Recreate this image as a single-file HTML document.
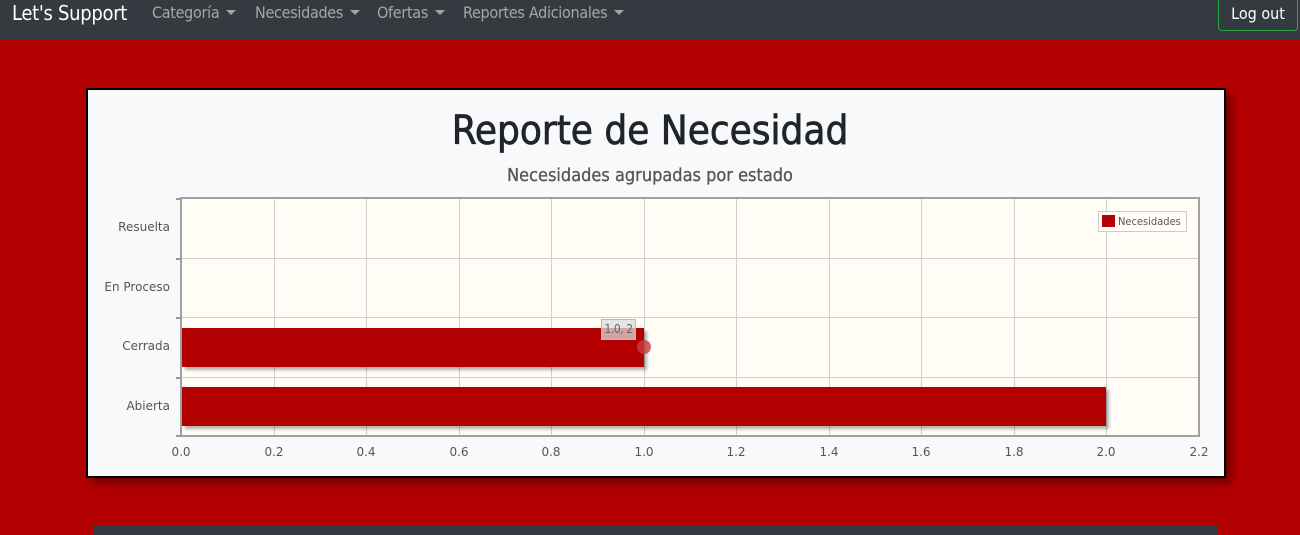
<!DOCTYPE html>
<html><head><meta charset="utf-8"><style>
*{margin:0;padding:0;box-sizing:border-box}
body{width:1300px;height:529px;background:#b30000;position:relative;overflow:hidden;font-family:"Liberation Sans",sans-serif}
.nav{position:absolute;left:0;top:0;width:1300px;height:40px;background:#343a40}
.brand{position:absolute;left:12px;top:1px;font-size:20px;color:#fff;font-family:"DejaVu Sans Condensed","Liberation Sans",sans-serif;letter-spacing:-0.3px}
.item{position:absolute;top:3px;font-size:16px;color:rgba(255,255,255,.55);font-family:"DejaVu Sans Condensed","Liberation Sans",sans-serif;letter-spacing:-0.3px}
.item:after{content:"";display:inline-block;margin-left:7px;vertical-align:3px;border-top:5px solid rgba(255,255,255,.55);border-left:5px solid transparent;border-right:5px solid transparent}
.logout{position:absolute;left:1218px;top:-2px;width:80px;height:33px;border:1px solid #28a745;border-radius:4px;color:#fff;font-size:16px;text-align:center;line-height:30px;font-family:"DejaVu Sans Condensed","Liberation Sans",sans-serif}
.card{position:absolute;left:86px;top:88px;width:1140px;height:390px;background:#f8f9fa;border:2px solid #000;box-shadow:6px 6px 8px rgba(0,0,0,.35)}
.t{position:absolute;width:100%;text-align:center;font-family:"DejaVu Sans Condensed","DejaVu Sans",sans-serif;color:#212529}
.plot{position:absolute;left:180px;top:197px;width:1020px;height:240px;background:#fffdf6;border:2px solid #a0a0a0}
.vl{position:absolute;top:199px;width:1px;height:236px;background:#cfcfcf}
.hl{position:absolute;left:182px;width:1016px;height:1px;background:#cfcfcf}
.yl{position:absolute;right:1130px;font-size:12px;color:#555;font-family:"DejaVu Sans",sans-serif}
.xl{position:absolute;top:445px;font-size:12px;color:#555;font-family:"DejaVu Sans",sans-serif;transform:translateX(-50%)}
.bar{position:absolute;left:182px;height:39px;background:#b30000;box-shadow:3px 3px 3px rgba(0,0,0,.3)}
.tk{position:absolute;left:176px;width:4px;height:2px;background:#999}
</style></head><body>
<div class="nav">
<div class="brand">Let's Support</div>
<div class="item" style="left:152px">Categoría</div>
<div class="item" style="left:255px">Necesidades</div>
<div class="item" style="left:377px">Ofertas</div>
<div class="item" style="left:463px">Reportes Adicionales</div>
<div class="logout">Log out</div>
</div>
<div class="card"></div>
<div class="t" style="top:108px;font-size:40px;-webkit-text-stroke:0.7px #212529;left:0">Reporte de Necesidad</div>
<div class="t" style="top:165px;font-size:18px;-webkit-text-stroke:0.3px #555;color:#555;left:0">Necesidades agrupadas por estado</div>
<div class="plot"></div>
<div class="vl" style="left:274px"></div><div class="vl" style="left:366px"></div><div class="vl" style="left:459px"></div><div class="vl" style="left:551px"></div><div class="vl" style="left:644px"></div><div class="vl" style="left:736px"></div><div class="vl" style="left:829px"></div><div class="vl" style="left:921px"></div><div class="vl" style="left:1014px"></div><div class="vl" style="left:1106px"></div>
<div class="hl" style="top:258px"></div><div class="hl" style="top:317px"></div><div class="hl" style="top:377px"></div>
<div class="tk" style="top:198px"></div><div class="tk" style="top:258px"></div><div class="tk" style="top:317px"></div><div class="tk" style="top:377px"></div><div class="tk" style="top:435px"></div>
<div class="bar" style="top:328px;width:462px"></div>
<div class="bar" style="top:387px;width:924px"></div>
<div style="position:absolute;left:637px;top:340px;width:14px;height:14px;border-radius:50%;background:rgba(200,60,60,.8)"></div>
<div style="position:absolute;left:601px;top:319px;width:35px;height:21px;background:rgba(220,220,220,.75);border:1px solid #bbb;font-size:12px;color:#666;text-align:center;line-height:19px;white-space:nowrap;letter-spacing:-0.5px;font-family:'DejaVu Sans Condensed',sans-serif">1.0, 2</div>
<div style="position:absolute;left:1098px;top:211px;width:89px;height:21px;border:1px solid #ccc;background:#fffdf6;font-size:11px;color:#555;font-family:'DejaVu Sans Condensed','DejaVu Sans',sans-serif;line-height:19px;padding-left:19px">Necesidades<span style="position:absolute;left:3px;top:3px;width:13px;height:12px;background:#b30000"></span></div>
<div class="yl" style="top:220px">Resuelta</div>
<div class="yl" style="top:280px">En Proceso</div>
<div class="yl" style="top:339px">Cerrada</div>
<div class="yl" style="top:399px">Abierta</div>
<div class="xl" style="left:181px">0.0</div><div class="xl" style="left:274px">0.2</div><div class="xl" style="left:366px">0.4</div><div class="xl" style="left:459px">0.6</div><div class="xl" style="left:551px">0.8</div><div class="xl" style="left:644px">1.0</div><div class="xl" style="left:736px">1.2</div><div class="xl" style="left:829px">1.4</div><div class="xl" style="left:921px">1.6</div><div class="xl" style="left:1014px">1.8</div><div class="xl" style="left:1106px">2.0</div><div class="xl" style="left:1199px">2.2</div>
<div style="position:absolute;left:93px;top:525px;width:1125px;height:10px;background:#343a40"></div>
</body></html>
